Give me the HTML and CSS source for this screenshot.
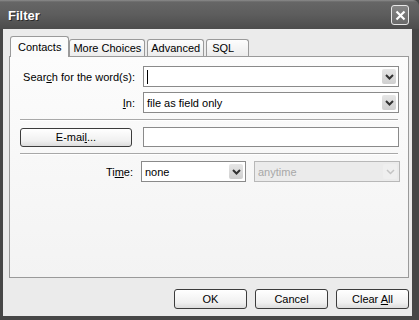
FILE: index.html
```html
<html>
    <head>
        <title>Filter</title>
        <link rel="stylesheet" href="styles.css">
    </head>
    <body>
        <div id="window">
            <div class="titlebar">
                <span class="title">Filter</span>
                <span class="close">
                    <svg width="11" height="11" viewBox="0 0 11 11">
                        <path d="M1.5 1.5 L9.5 9.5 M9.5 1.5 L1.5 9.5" stroke="#fff" stroke-width="2.2" fill="none"/>
                    </svg>
                </span>
            </div>
            <div class="client">
                <div class="tabs">
                    <div class="tab active">Contacts</div>
                    <div class="tab">More Choices</div>
                    <div class="tab">Advanced</div>
                    <div class="tab sql">SQL</div>
                </div>
                <div class="pane">
                    <div class="row first">
                        <span class="label">Sear<u>c</u>h for the word(s):</span>
                        <div class="combo">
                            <span class="value"><span class="caret"></span></span>
                            <span class="drop"><svg width="9" height="6" viewBox="0 0 9 6"><path d="M1 1 L4.5 4.5 L8 1" stroke="#333" stroke-width="2" fill="none"/></svg></span>
                        </div>
                    </div>
                    <div class="row">
                        <span class="label"><u>I</u>n:</span>
                        <div class="combo">
                            <span class="value">file as field only</span>
                            <span class="drop"><svg width="9" height="6" viewBox="0 0 9 6"><path d="M1 1 L4.5 4.5 L8 1" stroke="#333" stroke-width="2" fill="none"/></svg></span>
                        </div>
                    </div>
                    <div class="sep"></div>
                    <div class="row email">
                        <span class="button wide"><span>E-mai<u>l</u>...</span></span>
                        <div class="textbox"></div>
                    </div>
                    <div class="sep"></div>
                    <div class="row time">
                        <span class="label">Ti<u>m</u>e:</span>
                        <div class="pair">
                            <div class="combo short">
                                <span class="value">none</span>
                                <span class="drop"><svg width="9" height="6" viewBox="0 0 9 6"><path d="M1 1 L4.5 4.5 L8 1" stroke="#333" stroke-width="2" fill="none"/></svg></span>
                            </div>
                            <div class="combo disabled">
                                <span class="value">anytime</span>
                                <span class="drop"><svg width="9" height="6" viewBox="0 0 9 6"><path d="M1 1 L4.5 4.5 L8 1" stroke="#c4c4c4" stroke-width="1.5" fill="none"/></svg></span>
                            </div>
                        </div>
                    </div>
                </div>
                <div class="actions">
                    <span class="button"><span>OK</span></span>
                    <span class="button"><span>Cancel</span></span>
                    <span class="button"><span>Clear <u>A</u>ll</span></span>
                </div>
            </div>
        </div>
    </body>
</html>
```

FILE: styles.css
```css
body {
    margin: 0;
    font-family: "Liberation Sans", Arial, sans-serif;
    font-size: 11px;
    color: #000;
}
#window {
    width: 419px;
    height: 320px;
    display: flex;
    flex-direction: column;
    background-color: #474747;
}
.titlebar {
    height: 29px;
    display: flex;
    align-items: center;
    justify-content: space-between;
    padding: 0 10px 0 8px;
    box-sizing: border-box;
    border-top-right-radius: 6px;
    background: linear-gradient(#8c8c8c 0, #666 2px, #5d5d5d 50%, #4c4c4c 100%);
}
.title {
    font-weight: bold;
    font-size: 13px;
    color: #fff;
    text-shadow: 1px 1px 0 #2a2a2a;
    padding-top: 1px;
}
.close {
    width: 16px;
    height: 18px;
    border: 1px solid #e8e8e8;
    border-radius: 3px;
    background: linear-gradient(#858585, #6a6a6a);
    display: flex;
    align-items: center;
    justify-content: center;
    margin-top: 1px;
}
.client {
    flex: 1;
    margin: 0 7px 4px 3px;
    background-color: #ebebeb;
    display: flex;
    flex-direction: column;
    padding: 7px 3px 0 6px;
}
.tabs {
    display: flex;
    height: 20px;
    align-items: flex-end;
    padding-left: 1px;
    position: relative;
    z-index: 1;
}
.tab {
    height: 16px;
    line-height: 17px;
    padding: 0 3px;
    margin-right: 2px;
    border: 1px solid #9a9a9a;
    border-bottom: none;
    border-radius: 3px 3px 0 0;
    background: linear-gradient(#fdfdfd, #ececec);
}
.tab.sql {
    padding: 0 14px 0 5px;
}
.tab.active {
    height: 20px;
    line-height: 20px;
    padding: 0 7px 0 7px;
    margin-right: 0;
    margin-bottom: -1px;
    background: #fbfbfb;
}
.pane {
    height: 220px;
    border: 1px solid #9a9a9a;
    background: linear-gradient(#fcfcfc, #f3f3f3);
    padding: 0 8px 0 10px;
}
.row {
    display: flex;
    align-items: center;
    height: 21px;
    margin-top: 5px;
}
.row.first {
    margin-top: 9px;
}
.label {
    width: 115px;
    text-align: right;
    margin-right: 8px;
}
.combo {
    width: 254px;
    height: 19px;
    border: 1px solid #8a8a8a;
    background-color: #fff;
    display: flex;
    align-items: center;
    justify-content: space-between;
}
.value {
    padding-left: 3px;
    display: flex;
    align-items: center;
}
.caret {
    display: inline-block;
    width: 1px;
    height: 14px;
    background-color: #000;
}
.drop {
    width: 14px;
    height: 15px;
    margin-right: 2px;
    border-radius: 2px;
    background: linear-gradient(#e6e6e6, #cfcfcf);
    display: flex;
    align-items: center;
    justify-content: center;
}
.sep {
    margin-top: 6px;
    margin-right: 2px;
    border-top: 1px solid #a8a8a8;
    border-bottom: 1px solid #fff;
}
.row.email {
    height: 20px;
    margin-top: 6px;
}
.textbox {
    width: 254px;
    height: 18px;
    margin-left: 11px;
    border: 1px solid #8a8a8a;
    background-color: #fff;
}
.button {
    width: 71px;
    height: 18px;
    border: 1px solid #3c3c3c;
    border-radius: 3px;
    background: linear-gradient(#fff, #f0f0f0 70%, #dcdcdc);
    display: flex;
    align-items: center;
    justify-content: center;
}
.button.wide {
    width: 110px;
    height: 17px;
}
.row.time {
    margin-top: 6px;
}
.pair {
    display: flex;
    gap: 8px;
}
.combo.short {
    width: 103px;
}
.combo.disabled {
    width: 144px;
    background-color: #ebebeb;
    border-color: #b8b8b8;
    color: #a8a8a8;
}
.combo.disabled .drop {
    background: #efefef;
}
.actions {
    display: flex;
    justify-content: flex-end;
    gap: 8px;
    margin-top: 11px;
}
```
